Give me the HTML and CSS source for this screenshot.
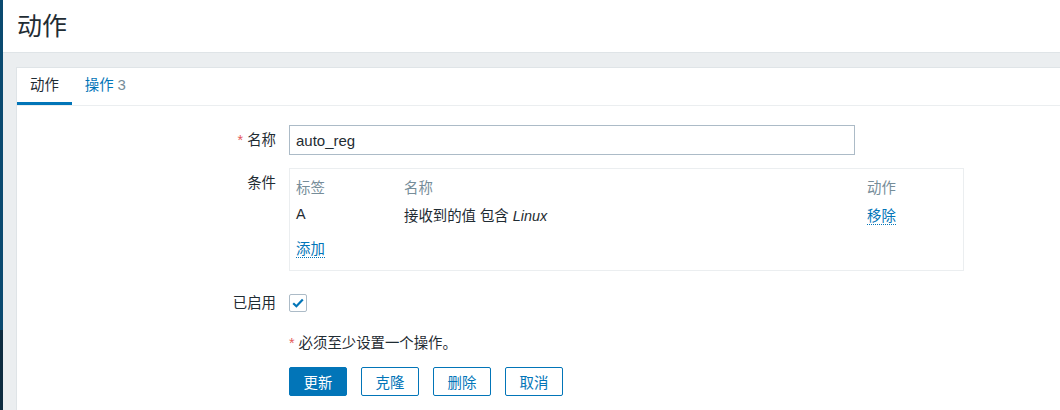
FILE: index.html
```html
<!DOCTYPE html>
<html lang="zh-CN">
<head>
    <meta charset="UTF-8">
    <meta name="viewport" content="width=device-width, initial-scale=1.0">
    <title>动作</title>
    <link rel="stylesheet" href="styles.css">
</head>
<body>
    <div class="sidebar-edge"></div>
    <div class="main">
        <header class="page-header">
            <h1>动作</h1>
        </header>
        <div class="content">
            <div class="card">
                <ul class="tabs">
                    <li class="tab active">动作</li>
                    <li class="tab">操作 <span class="count">3</span></li>
                </ul>
                <form class="form">
                    <div class="row row-name">
                        <label class="label"><span class="required">*</span> 名称</label>
                        <div class="field">
                            <input type="text" class="text-input" value="auto_reg">
                        </div>
                    </div>

                    <div class="row row-conditions">
                        <label class="label">条件</label>
                        <div class="field">
                            <div class="conditions">
                                <table>
                                    <thead>
                                        <tr>
                                            <th class="col-label">标签</th>
                                            <th class="col-name">名称</th>
                                            <th>动作</th>
                                        </tr>
                                    </thead>
                                    <tbody>
                                        <tr>
                                            <td>A</td>
                                            <td>接收到的值 包含 <em>Linux</em></td>
                                            <td><a class="link" href="#">移除</a></td>
                                        </tr>
                                    </tbody>
                                    <tfoot>
                                        <tr>
                                            <td colspan="3"><a class="link" href="#">添加</a></td>
                                        </tr>
                                    </tfoot>
                                </table>
                            </div>
                        </div>
                    </div>

                    <div class="row row-enabled">
                        <label class="label">已启用</label>
                        <div class="field">
                            <span class="checkbox">
                                <svg width="12" height="10" viewBox="0 0 12 10">
                                    <path d="M1.2 5.2 L4.4 8.2 L10.8 1.6" fill="none" stroke="#0275b8" stroke-width="2.2"/>
                                </svg>
                            </span>
                        </div>
                    </div>

                    <div class="row row-note">
                        <div class="label"></div>
                        <div class="field note"><span class="required">*</span> 必须至少设置一个操作。</div>
                    </div>

                    <div class="row row-buttons">
                        <div class="label"></div>
                        <div class="field buttons">
                            <button type="button" class="btn">更新</button>
                            <button type="button" class="btn btn-alt">克隆</button>
                            <button type="button" class="btn btn-alt">删除</button>
                            <button type="button" class="btn btn-alt">取消</button>
                        </div>
                    </div>
                </form>
            </div>
        </div>
    </div>
</body>
</html>
```

FILE: styles.css
```css
body {
    margin: 0;
    height: 410px;
    display: flex;
    font-family: "Liberation Sans", Arial, "Noto Sans CJK SC", sans-serif;
    font-size: 14.4px;
    color: #1f2c33;
    overflow: hidden;
}
.sidebar-edge {
    width: 3px;
    flex-shrink: 0;
    background: linear-gradient(#0a4a70 0, #0a4a70 330px, #0d2b3f 330px);
}
.main {
    flex: 1;
    display: flex;
    flex-direction: column;
    background: #ebeef0;
    min-width: 0;
}
.page-header {
    background: #fff;
    height: 52px;
    border-bottom: 1px solid #dfe4e7;
    padding-left: 14px;
}
.page-header h1 {
    margin: 0;
    font-size: 25px;
    font-weight: normal;
    line-height: 52px;
}
.content {
    flex: 1;
    padding: 14px 0 0 13px;
    display: flex;
}
.card {
    flex: 1;
    background: #fff;
    border: 1px solid #dfe4e7;
    border-right: none;
    border-bottom: none;
}
.tabs {
    list-style: none;
    margin: 0;
    padding: 0;
    display: flex;
    border-bottom: 1px solid #ebeef0;
}
.tab {
    padding: 0 13px;
    height: 34px;
    line-height: 34px;
    border-bottom: 3px solid transparent;
    color: #0275b8;
}
.tab.active {
    color: #1f2c33;
    border-bottom-color: #0275b8;
}
.tab .count {
    color: #768d99;
    font-size: 15px;
}
.form {
    padding-top: 19px;
}
.row {
    display: flex;
    column-gap: 13px;
}
.label {
    width: 259px;
    flex-shrink: 0;
    text-align: right;
    line-height: 30px;
}
.required {
    color: #e45959;
}
.text-input {
    box-sizing: border-box;
    width: 566px;
    height: 30px;
    margin: 0;
    padding: 0 6px;
    border: 1px solid #acbbc7;
    border-radius: 0;
    font: inherit;
    font-size: 15px;
    color: #1f2c33;
    outline: none;
}
.row-conditions {
    margin-top: 13px;
}
.conditions {
    box-sizing: border-box;
    width: 675px;
    height: 103px;
    border: 1px solid #ebeef0;
    padding: 3px 6px 0;
}
.conditions table {
    width: 100%;
    border-collapse: collapse;
}
.conditions th,
.conditions td {
    padding: 0;
    height: 28px;
    text-align: left;
    font-weight: normal;
    white-space: nowrap;
}
.conditions th {
    color: #768d99;
}
.conditions .col-label {
    width: 108px;
}
.conditions .col-name {
    width: 463px;
}
.conditions tfoot td {
    padding-top: 5px;
}
.link {
    color: #0275b8;
    text-decoration: none;
    border-bottom: 1px dotted #0275b8;
}
.row-enabled {
    margin-top: 23px;
}
.row-enabled .label {
    line-height: 18px;
}
.checkbox {
    box-sizing: border-box;
    width: 18px;
    height: 18px;
    border: 1px solid #acbbc7;
    border-radius: 2px;
    display: flex;
    align-items: center;
    justify-content: center;
}
.row-note {
    margin-top: 21px;
}
.row-note .label,
.note {
    line-height: 20px;
}
.row-buttons {
    margin-top: 14px;
}
.buttons {
    display: flex;
    gap: 14px;
}
.btn {
    width: 58px;
    height: 29px;
    padding: 0;
    border: 1px solid #0275b8;
    border-radius: 2px;
    background: #0275b8;
    color: #fff;
    font: inherit;
    cursor: pointer;
}
.btn-alt {
    background: #fff;
    color: #0275b8;
}
```
